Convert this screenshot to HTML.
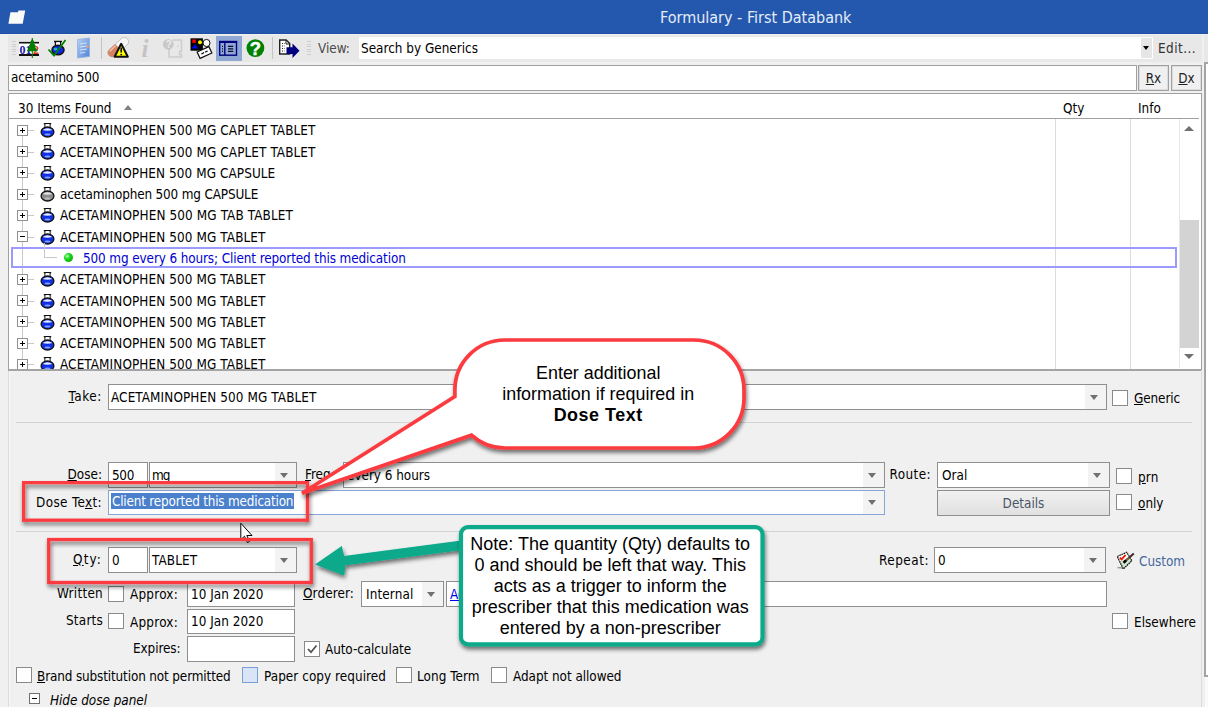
<!DOCTYPE html>
<html><head><meta charset="utf-8"><title>Formulary - First Databank</title>
<style>
html,body{margin:0;padding:0;}
body{width:1208px;height:707px;overflow:hidden;background:#f0f0f0;position:relative;
 font-family:"DejaVu Sans Condensed","Liberation Sans",sans-serif;font-size:13.4px;color:#000;}
.a{position:absolute;box-sizing:border-box;white-space:nowrap;}
.t{position:absolute;white-space:nowrap;line-height:16px;height:16px;}
.r{text-align:right;}
.in{position:absolute;box-sizing:border-box;background:#fff;border:1px solid #8f8f8f;white-space:nowrap;line-height:22px;padding-left:4px;height:24px;}
.cb{position:absolute;box-sizing:border-box;width:16px;height:16px;background:#fff;border:1px solid #8a8a8a;}
.arr{position:absolute;width:0;height:0;border-left:4px solid transparent;border-right:4px solid transparent;border-top:4px solid #707070;}
u{text-decoration:underline;}
</style></head><body>
<!-- title bar -->
<div class="a" style="left:0;top:0;width:1208px;height:34px;background:#2458ae;border-bottom:1px solid #1f50a5;"></div>
<div class="t" style="left:660px;top:9px;font-size:16px;color:#e6edf8;line-height:18px;height:18px;">Formulary - First Databank</div>
<svg class="a" style="left:0;top:0" width="30" height="30"><path d="M10.4 12.2L17.8 12.2L18.6 10.4L25.2 10.4L22.7 23.7L8.4 23.7Z" fill="#fafafa"/></svg>

<!-- toolbar -->
<div class="a" style="left:8px;top:35px;width:1194px;height:27px;background:#e8e8e8;"></div>
<div id="toolbar">
<div class="a" style="left:12px;top:41.0px;width:4px;height:1px;background:#cfcfcf;"></div>
<div class="a" style="left:12px;top:43.5px;width:4px;height:1px;background:#cfcfcf;"></div>
<div class="a" style="left:12px;top:46.0px;width:4px;height:1px;background:#cfcfcf;"></div>
<div class="a" style="left:12px;top:48.5px;width:4px;height:1px;background:#cfcfcf;"></div>
<div class="a" style="left:12px;top:51.0px;width:4px;height:1px;background:#cfcfcf;"></div>
<div class="a" style="left:12px;top:53.5px;width:4px;height:1px;background:#cfcfcf;"></div>
<div class="a" style="left:307px;top:41.0px;width:4px;height:1px;background:#cfcfcf;"></div>
<div class="a" style="left:307px;top:43.5px;width:4px;height:1px;background:#cfcfcf;"></div>
<div class="a" style="left:307px;top:46.0px;width:4px;height:1px;background:#cfcfcf;"></div>
<div class="a" style="left:307px;top:48.5px;width:4px;height:1px;background:#cfcfcf;"></div>
<div class="a" style="left:307px;top:51.0px;width:4px;height:1px;background:#cfcfcf;"></div>
<div class="a" style="left:307px;top:53.5px;width:4px;height:1px;background:#cfcfcf;"></div>
<div class="a" style="left:101px;top:37px;width:1px;height:22px;background:#c4c4c4;"></div>
<div class="a" style="left:272px;top:37px;width:1px;height:22px;background:#c4c4c4;"></div>
<svg class="a" style="left:0;top:34px" width="320" height="30" viewBox="0 34 320 30"><rect x="19" y="43" width="20" height="12" fill="#fff"/><path d="M19 42.7h20" stroke="#111" stroke-width="1.6"/><path d="M19 55h20" stroke="#111" stroke-width="2"/><text x="19.5" y="53.5" font-family="Liberation Serif,serif" font-weight="bold" font-size="12" fill="#1a1aa8" textLength="12">01</text><text x="33" y="53.5" font-family="Liberation Serif,serif" font-weight="bold" font-size="12" fill="#e03010" textLength="6">2</text><path d="M32.3 38v20" stroke="#008000" stroke-width="1.1"/><path d="M32.3 38.5l-2.2 4h1l-2.6 4h1.2l-3 4.8h11.2l-3-4.8h1.2l-2.6-4h1z" fill="#008000"/><path d="M54 41.5h8M55.5 42v4M60.5 42v4" stroke="#111" stroke-width="1.4" fill="none"/><rect x="56.3" y="42.3" width="3.5" height="4" fill="#fff"/><ellipse cx="58" cy="50" rx="6" ry="4.7" fill="#1020f0" stroke="#111" stroke-width="1.5"/><ellipse cx="55.5" cy="49" rx="2" ry="1.6" fill="#20b0c0"/><path d="M48.5 49.5l5.5 6L65.5 40" stroke="#008000" stroke-width="1.8" fill="none"/><defs><linearGradient id="dg" x1="0" y1="0" x2="1" y2="1"><stop offset="0" stop-color="#b8d4f4"/><stop offset="1" stop-color="#4f80d8"/></linearGradient></defs><path d="M77.5 39.5l12-1.5v18.5l-12 1.5z" fill="url(#dg)" stroke="#8fb0e0" stroke-width=".8"/><path d="M80 44l7-1M80 47l7-1M80 50l7-1M80 53l5-.7" stroke="#dce9fa" stroke-width=".9"/><circle cx="87.5" cy="46.5" r="1.2" fill="#f0a070"/><g transform="rotate(-42 118 47)"><rect x="105.5" y="43" width="25" height="8.6" rx="4.3" fill="#f6f6f6" stroke="#c0c0c0" stroke-width=".9"/><path d="M118 43h-8.2a4.3 4.3 0 0 0 0 8.6h8.2z" fill="#d58260"/><path d="M109 44.5h8" stroke="#f0c4b0" stroke-width="1.4"/></g><path d="M121.2 43.8l6.6 13h-13.2z" fill="#ffff00" stroke="#111" stroke-width="2" stroke-linejoin="round"/><path d="M121.2 47.5v5" stroke="#111" stroke-width="1.6"/><circle cx="121.2" cy="54.6" r=".9" fill="#111"/><text x="141.5" y="56.5" font-family="Liberation Serif,serif" font-style="italic" font-weight="bold" font-size="25" fill="#c4c4c4">i</text><path d="M169 46v11h12.5V54.5h-2v-3h2V40h-9" fill="none" stroke="#cdcdcd" stroke-width="1.6"/><circle cx="168.3" cy="44.3" r="5.4" fill="#c8c8c8"/><text x="165.8" y="48" font-family="Liberation Sans,sans-serif" font-weight="bold" font-size="10" fill="#ececec">?</text><circle cx="178" cy="46" r=".8" fill="#c6c6c6"/><rect x="190.5" y="38.3" width="12.4" height="12.4" fill="#000"/><rect x="192.3" y="39.5" width="3.4" height="3.4" fill="#ff0000"/><circle cx="200" cy="42.3" r="2" fill="#f0f000"/><path d="M195 44.3l3.4 4.3h-6.8z" fill="#0000ff"/><ellipse cx="206.5" cy="43" rx="3.5" ry="3.6" fill="#fff" stroke="#111" stroke-width="1"/><g transform="rotate(-25 204.5 52.5)"><rect x="198" y="49" width="13" height="7" fill="#fff" stroke="#111" stroke-width="1.2"/><path d="M201 52.5h7" stroke="#111" stroke-width="1.3" stroke-dasharray="3 1.2"/></g><rect x="216" y="36" width="26" height="25" fill="#8fa8d3"/><rect x="219.7" y="42.2" width="16.8" height="13" fill="#8fa8d3" stroke="#000080" stroke-width="1.4"/><path d="M219 41.8h18.2" stroke="#000080" stroke-width="2"/><path d="M224.8 42v13" stroke="#000080" stroke-width="1.4"/><path d="M228 46.3h5.2M228 48.8h5.2M228 51.3h5.2" stroke="#0a0a30" stroke-width="1.2"/><path d="M222 46.3h1M222 48.8h1M222 51.3h1" stroke="#0a0a30" stroke-width="1.2"/><circle cx="255.4" cy="48.1" r="8.9" fill="#008000"/><text x="255.4" y="54.7" text-anchor="middle" font-family="Liberation Sans,sans-serif" font-weight="bold" font-size="18.5" fill="#fff" stroke="#fff" stroke-width=".4">?</text><path d="M279.7 40h6.5l3.5 3.5v10.5h-10z" fill="#fff" stroke="#222" stroke-width="1.4"/><path d="M286 40v4h4" fill="none" stroke="#222" stroke-width="1"/><path d="M282 43.5h2.5M282 46h2.5M282 48.5h2.5M282 51h2.5" stroke="#222" stroke-width="1.2" stroke-dasharray="1 1"/><path d="M286.5 47.3h6v-3.8l7 7.3l-7 7.3v-4h-6z" fill="#000080"/></svg>
</div>
<div class="a" style="left:359px;top:37px;width:794px;height:22px;background:#fff;"></div><div class="a" style="left:1141px;top:38px;width:11px;height:20px;background:#e6e6e6;"></div>
<div class="t" style="left:318px;top:41px;color:#4a4a4a;">View:</div>
<div class="t" style="left:361px;top:41px;letter-spacing:0.011px">Search by Generics</div>
<div class="arr" style="left:1143px;top:46px;border-top-color:#000;border-left-width:3.5px;border-right-width:3.5px;"></div>
<div class="t" style="left:1158px;top:41px;color:#333;letter-spacing:0.455px">Edit...</div>

<!-- search -->
<div class="in" style="left:8px;top:65px;width:1129px;height:26px;border-color:#a0a0a0;padding-left:2px;line-height:23px;letter-spacing:-0.172px">acetamino 500</div>
<div class="a" style="left:1138px;top:65px;width:31px;height:26px;border:1px solid #a0a0a0;box-shadow:inset 0 0 0 1px #dcdcdc;background:#f0f0f0;text-align:center;line-height:26px;color:#222;"><u>R</u>x</div>
<div class="a" style="left:1171px;top:65px;width:31px;height:26px;border:1px solid #a0a0a0;box-shadow:inset 0 0 0 1px #dcdcdc;background:#f0f0f0;text-align:center;line-height:26px;color:#222;"><u>D</u>x</div>

<!-- list -->
<div class="a" id="list" style="left:8px;top:93px;width:1194px;height:278px;background:#fff;border:1px solid #a0a0a0;border-bottom-width:2px;"></div>
<div class="a" style="left:9px;top:118px;width:1190px;height:1px;background:#a0a0a0;"></div>
<div class="t" style="left:18px;top:101px;">30 Items Found</div>
<div class="t" style="left:1063px;top:101px;">Qty</div>
<div class="t" style="left:1138px;top:101px;">Info</div>
<div class="a" style="left:1055px;top:119px;width:1px;height:250px;background:#dcdcdc;"></div>
<div class="a" style="left:1130px;top:119px;width:1px;height:250px;background:#dcdcdc;"></div>

<div id="rows">
<svg width="0" height="0" style="position:absolute"><defs><g id="fb"><path d="M3.8 1.6h7.4M5 2v4M10 2v4" stroke="#111" stroke-width="1.2" fill="none"/><rect x="5.6" y="2.2" width="3.8" height="4" fill="#fff"/><ellipse cx="7.5" cy="10" rx="6.4" ry="5" fill="#1030e8" stroke="#111" stroke-width="1.3"/><path d="M2.6 8 Q7.5 4.6 12.4 8 Q7.5 9.6 2.6 8Z" fill="#e8ecff"/><ellipse cx="7.5" cy="12.5" rx="3" ry="1" fill="#7fa0ff"/></g><g id="fg"><path d="M3.8 1.6h7.4M5 2v4M10 2v4" stroke="#111" stroke-width="1.2" fill="none"/><rect x="5.6" y="2.2" width="3.8" height="4" fill="#fff"/><ellipse cx="7.5" cy="10" rx="6.4" ry="5" fill="#8c8c8c" stroke="#111" stroke-width="1.3"/><path d="M2.6 8 Q7.5 4.6 12.4 8 Q7.5 9.6 2.6 8Z" fill="#e4e4e4"/><ellipse cx="7.5" cy="12.5" rx="3" ry="1" fill="#c0c0c0"/></g></defs></svg>
<div class="a" style="left:22px;top:130px;width:1px;height:239px;background:#c8c8c8;"></div>
<div class="a" style="left:28px;top:130px;width:6px;height:1px;background:#c8c8c8;"></div>
<svg class="a" style="left:17px;top:125px" width="11" height="11"><rect x=".5" y=".5" width="10" height="10" fill="#fff" stroke="#919191"/><path d="M3 5.5h5M5.5 3v5" stroke="#000" stroke-width="1"/></svg>
<svg class="a" style="left:40px;top:122px" width="15" height="16"><use href="#fb"/></svg>
<div class="t" style="left:60px;top:123px;letter-spacing:0.101px;">ACETAMINOPHEN 500 MG CAPLET TABLET</div>
<div class="a" style="left:28px;top:152px;width:6px;height:1px;background:#c8c8c8;"></div>
<svg class="a" style="left:17px;top:146px" width="11" height="11"><rect x=".5" y=".5" width="10" height="10" fill="#fff" stroke="#919191"/><path d="M3 5.5h5M5.5 3v5" stroke="#000" stroke-width="1"/></svg>
<svg class="a" style="left:40px;top:144px" width="15" height="16"><use href="#fb"/></svg>
<div class="t" style="left:60px;top:145px;letter-spacing:0.101px;">ACETAMINOPHEN 500 MG CAPLET TABLET</div>
<div class="a" style="left:28px;top:173px;width:6px;height:1px;background:#c8c8c8;"></div>
<svg class="a" style="left:17px;top:167px" width="11" height="11"><rect x=".5" y=".5" width="10" height="10" fill="#fff" stroke="#919191"/><path d="M3 5.5h5M5.5 3v5" stroke="#000" stroke-width="1"/></svg>
<svg class="a" style="left:40px;top:165px" width="15" height="16"><use href="#fb"/></svg>
<div class="t" style="left:60px;top:166px;letter-spacing:0.087px;">ACETAMINOPHEN 500 MG CAPSULE</div>
<div class="a" style="left:28px;top:194px;width:6px;height:1px;background:#c8c8c8;"></div>
<svg class="a" style="left:17px;top:189px" width="11" height="11"><rect x=".5" y=".5" width="10" height="10" fill="#fff" stroke="#919191"/><path d="M3 5.5h5M5.5 3v5" stroke="#000" stroke-width="1"/></svg>
<svg class="a" style="left:40px;top:186px" width="15" height="16"><use href="#fg"/></svg>
<div class="t" style="left:60px;top:187px;letter-spacing:-0.158px;">acetaminophen 500 mg CAPSULE</div>
<div class="a" style="left:28px;top:215px;width:6px;height:1px;background:#c8c8c8;"></div>
<svg class="a" style="left:17px;top:210px" width="11" height="11"><rect x=".5" y=".5" width="10" height="10" fill="#fff" stroke="#919191"/><path d="M3 5.5h5M5.5 3v5" stroke="#000" stroke-width="1"/></svg>
<svg class="a" style="left:40px;top:207px" width="15" height="16"><use href="#fb"/></svg>
<div class="t" style="left:60px;top:208px;letter-spacing:0.119px;">ACETAMINOPHEN 500 MG TAB TABLET</div>
<div class="a" style="left:28px;top:237px;width:6px;height:1px;background:#c8c8c8;"></div>
<svg class="a" style="left:17px;top:231px" width="11" height="11"><rect x=".5" y=".5" width="10" height="10" fill="#fff" stroke="#919191"/><path d="M3 5.5h5" stroke="#000" stroke-width="1"/></svg>
<svg class="a" style="left:40px;top:229px" width="15" height="16"><use href="#fb"/></svg>
<div class="t" style="left:60px;top:230px;letter-spacing:0.105px;">ACETAMINOPHEN 500 MG TABLET</div>
<div class="a" style="left:11px;top:247px;width:1166px;height:21px;border:2px solid #9a9aff;"></div>
<div class="a" style="left:44px;top:243px;width:1px;height:15px;background:#c8c8c8;"></div>
<div class="a" style="left:44px;top:257px;width:13px;height:1px;background:#c8c8c8;"></div>
<div class="a" style="left:64px;top:253px;width:9px;height:9px;border-radius:50%;background:radial-gradient(circle at 35% 35%,#b8ffb8 0,#18d818 35%,#0a9a0a 100%);"></div>
<div class="t" style="left:83px;top:251px;color:#0000d0;letter-spacing:-0.11px;">500 mg every 6 hours; Client reported this medication</div>
<div class="a" style="left:28px;top:279px;width:6px;height:1px;background:#c8c8c8;"></div>
<svg class="a" style="left:17px;top:274px" width="11" height="11"><rect x=".5" y=".5" width="10" height="10" fill="#fff" stroke="#919191"/><path d="M3 5.5h5M5.5 3v5" stroke="#000" stroke-width="1"/></svg>
<svg class="a" style="left:40px;top:271px" width="15" height="16"><use href="#fb"/></svg>
<div class="t" style="left:60px;top:272px;letter-spacing:0.105px;">ACETAMINOPHEN 500 MG TABLET</div>
<div class="a" style="left:28px;top:301px;width:6px;height:1px;background:#c8c8c8;"></div>
<svg class="a" style="left:17px;top:295px" width="11" height="11"><rect x=".5" y=".5" width="10" height="10" fill="#fff" stroke="#919191"/><path d="M3 5.5h5M5.5 3v5" stroke="#000" stroke-width="1"/></svg>
<svg class="a" style="left:40px;top:293px" width="15" height="16"><use href="#fb"/></svg>
<div class="t" style="left:60px;top:294px;letter-spacing:0.105px;">ACETAMINOPHEN 500 MG TABLET</div>
<div class="a" style="left:28px;top:322px;width:6px;height:1px;background:#c8c8c8;"></div>
<svg class="a" style="left:17px;top:316px" width="11" height="11"><rect x=".5" y=".5" width="10" height="10" fill="#fff" stroke="#919191"/><path d="M3 5.5h5M5.5 3v5" stroke="#000" stroke-width="1"/></svg>
<svg class="a" style="left:40px;top:314px" width="15" height="16"><use href="#fb"/></svg>
<div class="t" style="left:60px;top:315px;letter-spacing:0.105px;">ACETAMINOPHEN 500 MG TABLET</div>
<div class="a" style="left:28px;top:343px;width:6px;height:1px;background:#c8c8c8;"></div>
<svg class="a" style="left:17px;top:338px" width="11" height="11"><rect x=".5" y=".5" width="10" height="10" fill="#fff" stroke="#919191"/><path d="M3 5.5h5M5.5 3v5" stroke="#000" stroke-width="1"/></svg>
<svg class="a" style="left:40px;top:335px" width="15" height="16"><use href="#fb"/></svg>
<div class="t" style="left:60px;top:336px;letter-spacing:0.105px;">ACETAMINOPHEN 500 MG TABLET</div>
<div class="a" style="left:28px;top:364px;width:6px;height:1px;background:#c8c8c8;"></div>
<svg class="a" style="left:17px;top:359px" width="11" height="11"><rect x=".5" y=".5" width="10" height="10" fill="#fff" stroke="#919191"/><path d="M3 5.5h5M5.5 3v5" stroke="#000" stroke-width="1"/></svg>
<svg class="a" style="left:40px;top:356px" width="15" height="16"><use href="#fb"/></svg>
<div class="t" style="left:60px;top:357px;letter-spacing:0.105px;">ACETAMINOPHEN 500 MG TABLET</div>
<div class="a" style="left:9px;top:369px;width:1192px;height:2px;background:#a4a4a4;"></div>
<div class="a" style="left:0;top:371px;width:1203px;height:12px;background:#f0f0f0;"></div>
<div class="a" style="left:1179px;top:119px;width:20px;height:250px;background:#fff;"></div>
<div class="a" style="left:1179px;top:220px;width:20px;height:128px;background:#d3d3d3;"></div>
<div class="arr" style="left:1184px;top:354px;border-top:5px solid #707070;border-left-width:5px;border-right-width:5px;"></div>
<div class="arr" style="left:1184px;top:126px;border-top:0;border-bottom:5px solid #707070;border-left-width:5px;border-right-width:5px;"></div>
<div class="a" style="left:1179px;top:119px;width:1px;height:249px;background:#e8e8e8;"></div>
<div class="arr" style="left:124px;top:105px;border-top:0;border-bottom:5px solid #808080;border-left-width:4.5px;border-right-width:4.5px;"></div>
</div>

<!-- form -->
<div id="form">
<div class="a" style="left:16px;top:422px;width:1176px;height:1px;background:#d4d4d4;"></div>
<div class="a" style="left:16px;top:531px;width:1176px;height:1px;background:#d4d4d4;"></div>
<div class="a" style="left:1201px;top:370px;width:1px;height:337px;background:#dcdcdc;"></div>
<div class="a" style="left:8px;top:371px;width:1px;height:336px;background:#dcdcdc;"></div>
<div class="a" style="left:9px;top:371px;width:1px;height:336px;background:#f8f8f8;"></div>
<div class="a" style="left:1204px;top:35px;width:4px;height:27px;background:#e8e8e8;"></div>
<div class="a" style="left:1204px;top:62px;width:8px;height:615px;background:#fff;border:2px solid #a4a4a4;"></div>
<div class="a" style="left:1205px;top:677px;width:3px;height:30px;background:#fafafa;"></div>
<div class="t r" style="right:1106px;top:389px;color:#000;letter-spacing:0.58px;"><u>T</u>ake:</div>
<div class="in" style="left:108px;top:384px;width:999px;height:26px;line-height:25px;padding-left:2px;letter-spacing:0.105px;">ACETAMINOPHEN 500 MG TABLET</div>
<div class="a" style="left:1085px;top:385px;width:21px;height:24px;background:#f3f3f3;"></div>
<div class="arr" style="left:1090px;top:395px;border-left-width:4.5px;border-right-width:4.5px;border-top-width:5px;"></div>
<div class="cb" style="left:1112px;top:390px;"></div>
<div class="t" style="left:1134px;top:391px;color:#000;letter-spacing:-0.105px;"><u>G</u>eneric</div>
<div class="t r" style="right:1106px;top:467px;color:#000;letter-spacing:0.019px;"><u>D</u>ose:</div>
<div class="in" style="left:108px;top:462px;width:40px;height:26px;line-height:25px;padding-left:3px;letter-spacing:-0.333px;">500</div>
<div class="in" style="left:149px;top:462px;width:148px;height:26px;line-height:25px;padding-left:2px;letter-spacing:-0.995px;">mg</div>
<div class="a" style="left:275px;top:463px;width:21px;height:24px;background:#f3f3f3;"></div>
<div class="arr" style="left:280px;top:473px;border-left-width:4.5px;border-right-width:4.5px;border-top-width:5px;"></div>
<div class="t" style="left:305px;top:467px;color:#000;"><u>F</u>req:</div>
<div class="in" style="left:343px;top:462px;width:542px;height:26px;line-height:25px;padding-left:3px;letter-spacing:-0.017px;">every 6 hours</div>
<div class="a" style="left:863px;top:463px;width:21px;height:24px;background:#f3f3f3;"></div>
<div class="arr" style="left:868px;top:473px;border-left-width:4.5px;border-right-width:4.5px;border-top-width:5px;"></div>
<div class="t r" style="right:277px;top:467px;color:#000;letter-spacing:0.422px;">Route:</div>
<div class="in" style="left:937px;top:462px;width:173px;height:26px;line-height:25px;padding-left:4px;letter-spacing:0.082px;">Oral</div>
<div class="a" style="left:1088px;top:463px;width:21px;height:24px;background:#f3f3f3;"></div>
<div class="arr" style="left:1093px;top:473px;border-left-width:4.5px;border-right-width:4.5px;border-top-width:5px;"></div>
<div class="cb" style="left:1116px;top:468px;"></div>
<div class="t" style="left:1138px;top:470px;color:#000;letter-spacing:0.161px;"><u>p</u>rn</div>
<div class="t r" style="right:1106px;top:495px;color:#000;letter-spacing:0.366px;">Dose Te<u>x</u>t:</div>
<div class="in" style="left:108px;top:490px;width:777px;height:25px;line-height:24px;padding-left:3px;border-color:#86a5d8;"></div>
<div class="a" style="left:863px;top:491px;width:21px;height:23px;background:#f3f3f3;"></div>
<div class="arr" style="left:868px;top:500px;border-left-width:4.5px;border-right-width:4.5px;border-top-width:5px;"></div>
<div class="a" style="left:111px;top:493px;width:183px;height:16px;background:#4a80cc;"></div>
<div class="t" style="left:112px;top:494px;color:#fff;letter-spacing:-0.196px;">Client reported this medication</div>
<div class="a" style="left:937px;top:490px;width:173px;height:26px;background:linear-gradient(#f1f1f1,#e0e0e0);border:1px solid #8e8e8e;text-align:center;line-height:25px;color:#4a5568;">Details</div>
<div class="cb" style="left:1116px;top:494px;"></div>
<div class="t" style="left:1138px;top:496px;color:#000;letter-spacing:0.0px;"><u>o</u>nly</div>
<div class="t r" style="right:1106px;top:552px;color:#000;letter-spacing:1.145px;"><u>Q</u>ty:</div>
<div class="in" style="left:108px;top:547px;width:40px;height:26px;line-height:25px;padding-left:3px;">0</div>
<div class="in" style="left:149px;top:547px;width:148px;height:26px;line-height:25px;padding-left:2px;letter-spacing:0.133px;">TABLET</div>
<div class="a" style="left:275px;top:548px;width:21px;height:24px;background:#f3f3f3;"></div>
<div class="arr" style="left:280px;top:558px;border-left-width:4.5px;border-right-width:4.5px;border-top-width:5px;"></div>
<div class="t r" style="right:279px;top:553px;color:#000;letter-spacing:0.511px;">Repeat:</div>
<div class="in" style="left:934px;top:547px;width:172px;height:26px;line-height:25px;padding-left:3px;">0</div>
<div class="a" style="left:1084px;top:548px;width:21px;height:24px;background:#f3f3f3;"></div>
<div class="arr" style="left:1089px;top:558px;border-left-width:4.5px;border-right-width:4.5px;border-top-width:5px;"></div>
<div class="t" style="left:1139px;top:554px;color:#46689c;letter-spacing:-0.026px;">Custom</div>
<svg class="a" style="left:1114px;top:549px" width="24" height="24" viewBox="1114 549 24 24"><path d="M1117.5 567.5l5 .5" stroke="#9a9a9a" stroke-width="1.5"/><path d="M1117.3 556.5L1126.7 552.3L1131.8 560.7L1123.3 569Z" fill="#cfe9cf" stroke="#111" stroke-width="1.3" stroke-dasharray="1.6 .7"/><path d="M1118.3 556.7L1126.3 553.2L1128.8 557.3L1120.6 561.2Z" fill="#fff"/><path d="M1119.8 557.6l1.8 1.8l4-4.6" fill="none" stroke="#f01808" stroke-width="1.8"/><path d="M1133.8 553.6L1124.5 561.8" stroke="#3a2a2a" stroke-width="2"/><path d="M1126 560.5l-2.5 2.2" stroke="#000" stroke-width="2.6"/><path d="M1129.5 557.5l-3 2.6" stroke="#8a5a30" stroke-width="1.6"/></svg>
<div class="t r" style="right:1105px;top:586px;color:#000;letter-spacing:0.27px;">Written</div>
<div class="cb" style="left:108px;top:586px;"></div>
<div class="t r" style="right:1030px;top:587px;color:#000;letter-spacing:0.237px;">Approx:</div>
<div class="in" style="left:187px;top:581px;width:108px;height:26px;line-height:25px;padding-left:3px;letter-spacing:0.027px;">10 Jan 2020</div>
<div class="t" style="left:303px;top:586px;color:#000;letter-spacing:0.111px;"><u>O</u>rderer:</div>
<div class="in" style="left:361px;top:581px;width:83px;height:26px;line-height:25px;padding-left:4px;letter-spacing:0.137px;">Internal</div>
<div class="a" style="left:422px;top:582px;width:21px;height:24px;background:#f3f3f3;"></div>
<div class="arr" style="left:427px;top:592px;border-left-width:4.5px;border-right-width:4.5px;border-top-width:5px;"></div>
<div class="in" style="left:446px;top:581px;width:661px;height:26px;line-height:25px;padding-left:3px;"><span style="color:#0000ee;text-decoration:underline">Ad</span></div>
<div class="t r" style="right:1105px;top:613px;color:#000;letter-spacing:0.216px;">Starts</div>
<div class="cb" style="left:108px;top:613px;"></div>
<div class="t r" style="right:1030px;top:615px;color:#000;letter-spacing:0.237px;">Approx:</div>
<div class="in" style="left:187px;top:609px;width:108px;height:25px;line-height:24px;padding-left:3px;letter-spacing:0.027px;">10 Jan 2020</div>
<div class="cb" style="left:1112px;top:613px;"></div>
<div class="t" style="left:1134px;top:615px;color:#000;letter-spacing:0.042px;">Elsewhere</div>
<div class="t r" style="right:1027.5px;top:641px;color:#000;letter-spacing:-0.082px;">Expires:</div>
<div class="in" style="left:187px;top:636px;width:108px;height:26px;line-height:25px;padding-left:3px;"></div>
<div class="cb" style="left:304px;top:641px;"><svg width="14" height="14" style="position:absolute;left:0;top:0"><path d="M3 7l3 3.2l5.5-6.7" stroke="#505050" stroke-width="1.8" fill="none"/></svg></div>
<div class="t" style="left:325px;top:642px;color:#000;letter-spacing:-0.075px;">Auto-calculate</div>
<div class="cb" style="left:16px;top:667px;"></div>
<div class="t" style="left:37px;top:669px;color:#000;letter-spacing:-0.134px;"><u>B</u>rand substitution not permitted</div>
<div class="cb" style="left:242px;top:667px;background:#d9e5f7;border-color:#7aa0d8;"></div>
<div class="t" style="left:264px;top:669px;color:#000;letter-spacing:0.058px;">Paper copy required</div>
<div class="cb" style="left:396px;top:667px;"></div>
<div class="t" style="left:417px;top:669px;color:#000;letter-spacing:0.066px;">Long Term</div>
<div class="cb" style="left:491px;top:667px;"></div>
<div class="t" style="left:513px;top:669px;color:#000;letter-spacing:-0.039px;">Adapt not allowed</div>
<svg class="a" style="left:29px;top:693px" width="11" height="11"><rect x=".5" y=".5" width="10" height="10" fill="#fff" stroke="#707070"/><path d="M3 5.5h5" stroke="#000"/></svg>
<div class="t" style="left:50px;top:693px;font-style:italic;letter-spacing:-0.018px">Hide dose panel</div>
</div>
<div id="overlay">
<svg class="a" style="left:0;top:0;pointer-events:none" width="1208" height="707" viewBox="0 0 1208 707">
<defs><filter id="sh" x="-10%" y="-10%" width="125%" height="135%"><feGaussianBlur in="SourceAlpha" stdDeviation="2.2"/><feOffset dx="1.2" dy="3"/><feComponentTransfer><feFuncA type="linear" slope="0.55"/></feComponentTransfer><feMerge><feMergeNode/><feMergeNode in="SourceGraphic"/></feMerge></filter></defs>
<g filter="url(#sh)"><rect x="23.6" y="482.6" width="283.9" height="37.6" fill="none" stroke="#fb3b3f" stroke-width="3.3"/></g>
<path d="M240.8 523.200v16.500l3.7-3.500l2.8 6.300l2.3-1l-2.8-6h5.200z" fill="#fff" stroke="#000" stroke-width="1" stroke-linejoin="round"/>
<g filter="url(#sh)"><rect x="48.7" y="539.5" width="262.6" height="43.0" fill="none" stroke="#fb3b3f" stroke-width="3.3"/></g>
<g filter="url(#sh)"><path d="M504.9 340H694A50 50 0 0 1 744 390V398A50 50 0 0 1 694 448H504.9A50 50 0 0 1 471.5 435.2L302 493.3L454.9 396.5V390A50 50 0 0 1 504.9 340Z" fill="#fff" stroke="#fb3b3f" stroke-width="3.7" stroke-linejoin="miter"/></g>
<g filter="url(#sh)"><path d="M315.0 564.5L344.2 575.6L345.4 565.3L462.6 549.9L461.4 540.5L344.1 555.9L341.8 546.1Z" fill="#09a98b"/></g>
<g filter="url(#sh)"><rect x="461" y="527.1" width="301.5" height="117.3" rx="7" fill="#fff" stroke="#09a98b" stroke-width="4.2"/></g>
<text x="598.2" y="379.3" text-anchor="middle" font-family="Liberation Sans,sans-serif" font-size="17.9" fill="#000">Enter additional</text>
<text x="598.2" y="400.2" text-anchor="middle" font-family="Liberation Sans,sans-serif" font-size="17.9" fill="#000">information if required in</text>
<text x="598.2" y="421.1" text-anchor="middle" font-family="Liberation Sans,sans-serif" font-size="17.9" font-weight="bold" letter-spacing="0.55" fill="#000">Dose Text</text>
<text x="610.2" y="549.7" text-anchor="middle" font-family="Liberation Sans,sans-serif" font-size="18" fill="#000">Note: The quantity (Qty) defaults to</text>
<text x="610.2" y="570.7" text-anchor="middle" font-family="Liberation Sans,sans-serif" font-size="18" fill="#000">0 and should be left that way. This</text>
<text x="610.2" y="591.7" text-anchor="middle" font-family="Liberation Sans,sans-serif" font-size="18" fill="#000">acts as a trigger to inform the</text>
<text x="610.2" y="612.7" text-anchor="middle" font-family="Liberation Sans,sans-serif" font-size="18" fill="#000">prescriber that this medication was</text>
<text x="610.2" y="633.7" text-anchor="middle" font-family="Liberation Sans,sans-serif" font-size="18" fill="#000">entered by a non-prescriber</text>
</svg>
</div>
</body></html>
